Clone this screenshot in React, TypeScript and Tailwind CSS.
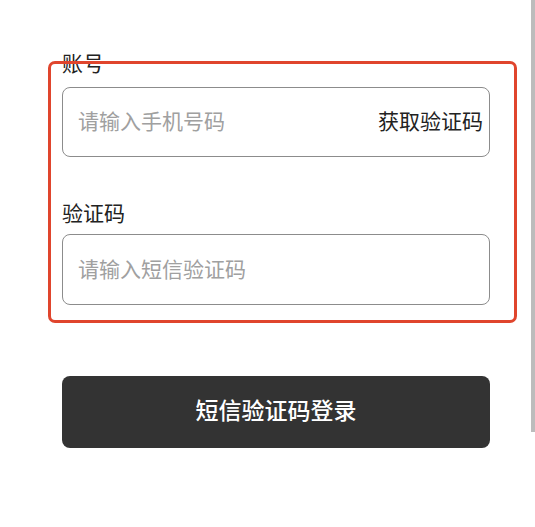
const font = { fontFamily: '"Noto Sans CJK SC", "Noto Sans", sans-serif' }

export default function App() {
  return (
    <div className="relative w-[535px] h-[527px] bg-white overflow-hidden" style={font}>
      <div className="pl-[62px] pt-[48px] w-[490px]">
        <div className="text-[21px] leading-7 text-[#222]">账号</div>
        <div className="mt-[11px] h-[70px] rounded-lg border border-[#8c8c8c] flex items-center justify-between pl-[15px] pr-[6px] pb-[2px]">
          <input
            className="flex-1 min-w-0 outline-none bg-transparent text-[21px] text-[#222] placeholder:text-[#a0a0a0]"
            placeholder="请输入手机号码"
          />
          <button className="text-[21px] text-[#222]">获取验证码</button>
        </div>

        <div className="mt-[41px] text-[21px] leading-7 text-[#222]">验证码</div>
        <div className="mt-[8px] h-[71px] rounded-lg border border-[#8c8c8c] flex items-center pl-[15px] pr-[6px] pb-[2px]">
          <input
            className="flex-1 min-w-0 outline-none bg-transparent text-[21px] text-[#222] placeholder:text-[#a0a0a0]"
            placeholder="请输入短信验证码"
          />
        </div>

        <button className="mt-[71px] w-full h-[72px] rounded-lg bg-[#333333] text-white text-[23px] font-medium pb-[5px]">
          短信验证码登录
        </button>
      </div>

      {/* annotation frame */}
      <div className="absolute left-[48px] top-[61px] w-[469px] h-[262px] border-[3px] border-[#e0452d] rounded-[7px] pointer-events-none" />

      {/* scrollbar */}
      <div className="absolute right-0 top-0 w-[4px] h-[432px] bg-[#bcbcbc]" />
    </div>
  )
}
